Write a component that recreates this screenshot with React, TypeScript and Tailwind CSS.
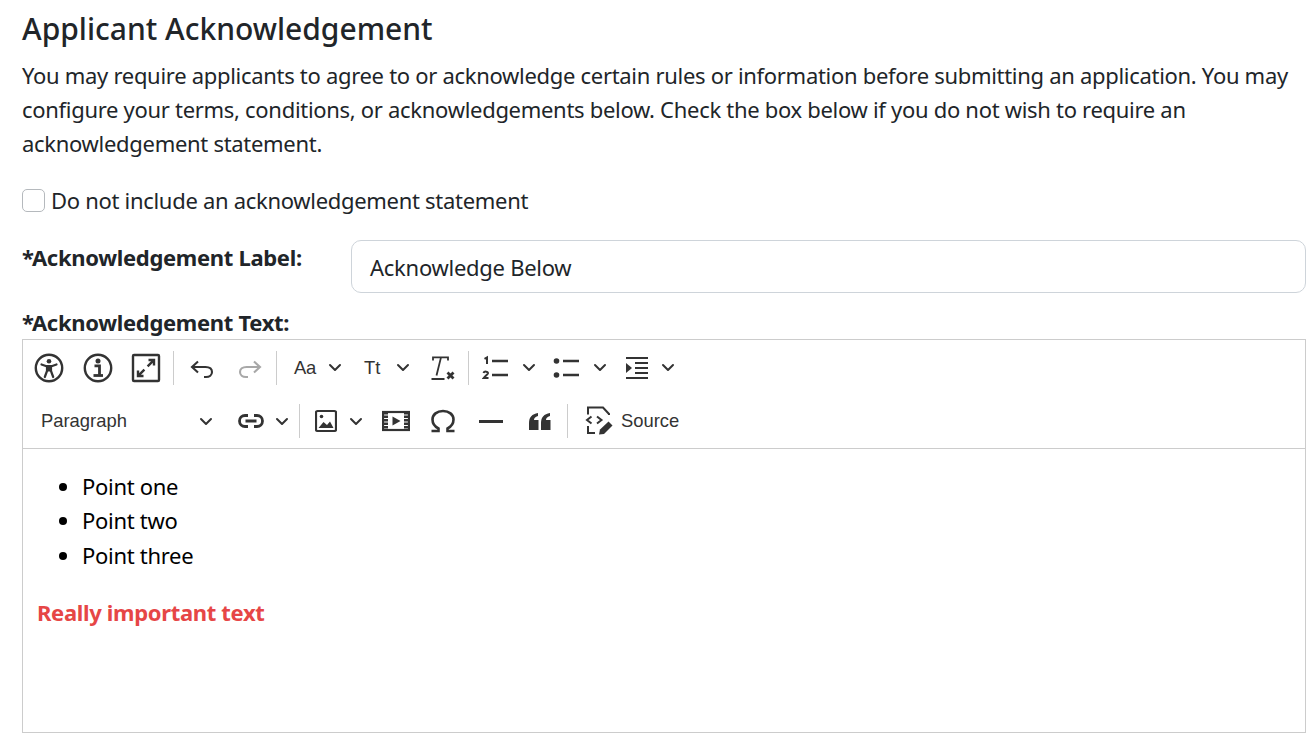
const sans = "font-['Noto_Sans',sans-serif]";
const tool = "text-[18.4px] font-['Liberation_Sans',sans-serif] shrink-0";

function Chevron({ className = "" }: { className?: string }) {
  return (
    <svg viewBox="0 0 14 9" className={`w-[14px] h-[9px] shrink-0 ${className}`} fill="none" stroke="#333" strokeWidth="2" strokeLinecap="round" strokeLinejoin="round">
      <path d="M2 2l5 5 5-5" />
    </svg>
  );
}

function Sep({ className = "" }: { className?: string }) {
  return <div className={`w-px h-[34px] bg-[#ccc] shrink-0 ${className}`} />;
}

function Ic({ w, vb, className = "", children }: { w: number; vb: string; className?: string; children: React.ReactNode }) {
  return (
    <svg viewBox={vb} width={w} height={30} className={`shrink-0 ${className}`} fill="none" stroke="#333" strokeWidth="2">
      {children}
    </svg>
  );
}

export default function App() {
  return (
    <div className={`w-[1313px] h-[738px] overflow-hidden bg-white pl-[22px] pr-[7px] pt-[9px] text-[#212529] ${sans}`}>
      <h2 className="text-[30px] leading-[40px] font-medium">Applicant Acknowledgement</h2>
      <p className="mt-[9px] text-[22px] leading-[34px] tracking-[-0.3px]">
        You may require applicants to agree to or acknowledge certain rules or information before submitting an application. You may configure your terms, conditions, or acknowledgements below. Check the box below if you do not wish to require an acknowledgement statement.
      </p>

      <div className="mt-[23px] flex items-center h-[34px]">
        <div className="w-[23px] h-[23px] rounded-[5px] border border-[#b5b9bd] bg-white" />
        <span className="ml-[6px] text-[22px] tracking-[-0.3px]">Do not include an acknowledgement statement</span>
      </div>

      <div className="mt-[23px] flex items-start">
        <label className="w-[329px] text-[22px] leading-[34px] font-bold tracking-[-0.31px]"><span className="tracking-[-2px]">*</span>Acknowledgement Label:</label>
        <div className="flex-1 h-[53px] rounded-[10px] border border-[#ced4da] flex items-center px-[18px] pt-[1px] text-[22px] tracking-[-0.27px]">Acknowledge Below</div>
      </div>

      <div className="mt-[12px] text-[22px] leading-[34px] font-bold tracking-[-0.31px]"><span className="tracking-[-2px]">*</span>Acknowledgement Text:</div>

      <div className="h-[394px] border border-[#ccc]">
        <div className="h-[109px] border-b border-[#ccc] text-[#333]">
          {/* first toolbar row */}
          <div className="h-[55px] flex items-center">
            <Ic w={30} vb="0 0 30 30" className="ml-[11px]">
              <circle cx="15" cy="15" r="13.2" strokeWidth="2.4" />
              <circle cx="15" cy="8.2" r="2.300" fill="#333" stroke="none" />
              <path d="M7.500 11.500L12.500 13.200h5l5-1.700M13 13.500v4.500L10.800 24M17 13.500v4.500l2.200 6M13 17.500h4" strokeWidth="2.200" strokeLinecap="round" strokeLinejoin="round" />
              <path d="M12.800 13h4.400v5h-4.400z" fill="#333" stroke="none" />
            </Ic>
            <Ic w={30} vb="0 0 30 30" className="ml-[19px]">
              <circle cx="15" cy="15" r="13.2" strokeWidth="2.4" />
              <circle cx="15" cy="8" r="2.500" fill="#333" stroke="none" />
              <path d="M11.500 12.800h5v9" strokeWidth="2.800" />
              <path d="M10.500 22.500h9.500" strokeWidth="2.800" />
            </Ic>
            <Ic w={30} vb="0 0 30 30" className="ml-[18px]">
              <rect x="2" y="2" width="26" height="26" rx="1" strokeWidth="2.400" />
              <path d="M16.600 13.400l6-6M7.400 22.600l6-6M17.500 7h5.500v5.500M7 17.500V23h5.500" strokeWidth="2.400" />
            </Ic>
            <Sep className="ml-[12px]" />
            <Ic w={24} vb="0 0 24 30" className="ml-[16px]">
              <path d="M8 8.500L2 14l6 5.500M2.500 14h13c4 0 6.500 2 6.500 5s-2.500 5-6 5h-2" strokeWidth="2.100" />
            </Ic>
            <Ic w={24} vb="0 0 24 30" className="ml-[24px]">
              <path d="M16 8.500l6 5.500-6 5.500M21.500 14h-13c-4 0-6.500 2-6.500 5s2.500 5 6 5h2" stroke="#a8a8a8" strokeWidth="2.100" />
            </Ic>
            <Sep className="ml-[14px]" />
            <span className={`ml-[17px] w-[23px] tracking-[-0.3px] ${tool}`}>Aa</span>
            <Chevron className="ml-[11px]" />
            <span className={`ml-[22px] w-[18px] ${tool}`}>Tt</span>
            <Chevron className="ml-[14px]" />
            <Ic w={24} vb="0 0 24 30" className="ml-[21px]">
              <path d="M2 7.500V4.400h15v3.100M10 4.400L5.500 22.500M0.500 26h13" strokeWidth="1.800" />
              <path d="M16.500 19.500l6 6M22.500 19.500l-6 6" strokeWidth="2.800" />
            </Ic>
            <Sep className="ml-[13px]" />
            <Ic w={27} vb="0 0 27 30" className="ml-[13px]">
              <path d="M10 8h16M10 22h16" strokeWidth="2.400" />
              <path d="M2.500 5.800l2.500-1.300v6.500" strokeWidth="2" />
              <path d="M1.500 20c.6-2 5-1.800 4.400.5-.3 1-2.600 2.500-4.200 4.500h4.800" strokeWidth="2" />
            </Ic>
            <Chevron className="ml-[13px]" />
            <Ic w={27} vb="0 0 27 30" className="ml-[17px]">
              <path d="M10 8h16M10 22h16" strokeWidth="2.400" />
              <circle cx="3.500" cy="8" r="2.800" fill="#333" stroke="none" />
              <circle cx="3.500" cy="22" r="2.800" fill="#333" stroke="none" />
            </Ic>
            <Chevron className="ml-[13px]" />
            <Ic w={24} vb="0 0 24 30" className="ml-[18px]">
              <path d="M1 5h22M10 10h13M10 15h13M10 20h13M1 25h22" strokeWidth="2.200" />
              <path d="M1 10v10l6-5z" fill="#333" stroke="none" />
            </Ic>
            <Chevron className="ml-[12px]" />
          </div>

          {/* second toolbar row */}
          <div className="h-[52px] flex items-center">
            <span className={`ml-[18px] w-[158px] ${tool}`}>Paragraph</span>
            <Chevron />
            <Ic w={26} vb="0 0 26 30" className="ml-[25px]">
              <path d="M10 9.500H7a5.500 5.500 0 0 0 0 11h3M16 9.500h3a5.500 5.500 0 0 1 0 11h-3M7.500 15h11" strokeWidth="2.800" />
            </Ic>
            <Chevron className="ml-[11px]" />
            <Sep className="ml-[10px] w-[2px]" />
            <Ic w={22} vb="0 0 22 30" className="ml-[15px]">
              <rect x="1" y="5" width="20" height="20" rx="1.500" strokeWidth="2.200" />
              <circle cx="6.500" cy="10.500" r="1.800" fill="#333" stroke="none" />
              <path d="M3.500 22l5-6 3.500 3 3-3.500 3.500 6.500z" fill="#333" stroke="none" />
            </Ic>
            <Chevron className="ml-[12px]" />
            <Ic w={28} vb="0 0 28 30" className="ml-[19px]">
              <rect x="1" y="6" width="26" height="18" strokeWidth="2.200" />
              <path d="M4 6v18M24 6v18" strokeWidth="4" strokeDasharray="2.500 1" />
              <path d="M10.500 10.500v9l8-4.500z" fill="#333" stroke="none" />
            </Ic>
            <Ic w={26} vb="0 0 26 30" className="ml-[20px]">
              <path d="M1.500 25h7v-2.500C4.500 20.500 2.500 17.500 2.500 13.500 2.500 8.500 7 5 13 5s10.500 3.500 10.500 8.500c0 4-2 7-6 9V25h7" strokeWidth="2.600" />
            </Ic>
            <div className="ml-[23px] w-[24px] h-[3px] bg-[#333] shrink-0" />
            <Ic w={24} vb="0 0 24 30" className="ml-[25px]">
              <path d="M1 24V17c0-6 3-9 9-10v3c-3 1-4 2-4 4h4.500v10zM13 24V17c0-6 3-9 9-10v3c-3 1-4 2-4 4h4.500v10z" fill="#333" stroke="none" />
            </Ic>
            <Sep className="ml-[15px] w-[2px]" />
            <Ic w={28} vb="0 0 28 30" className="ml-[17px]">
              <path d="M3 8.500V1.500h15l6 6.500v1M3 20v7h7" strokeWidth="2" />
              <path d="M6.500 10.500L2 14l4.500 3.500M12 10.500L16.500 14 12 17.500" strokeWidth="2" />
              <path d="M14 28.500l1-5 8.500-8 4 4-8.500 8.500z" fill="#333" stroke="none" />
            </Ic>
            <span className={`ml-[8px] ${tool}`}>Source</span>
          </div>
        </div>

        {/* editor content */}
        <div className="pl-[14px] pt-[20px] text-black text-[22px] leading-[34.400px] tracking-[-0.3px]">
          <ul className="list-disc pl-[45px]">
            <li>Point one</li>
            <li>Point two</li>
            <li>Point three</li>
          </ul>
          <p className="mt-[23px] font-bold text-[#e64646] tracking-[-0.33px]">Really important text</p>
        </div>
      </div>
    </div>
  );
}
